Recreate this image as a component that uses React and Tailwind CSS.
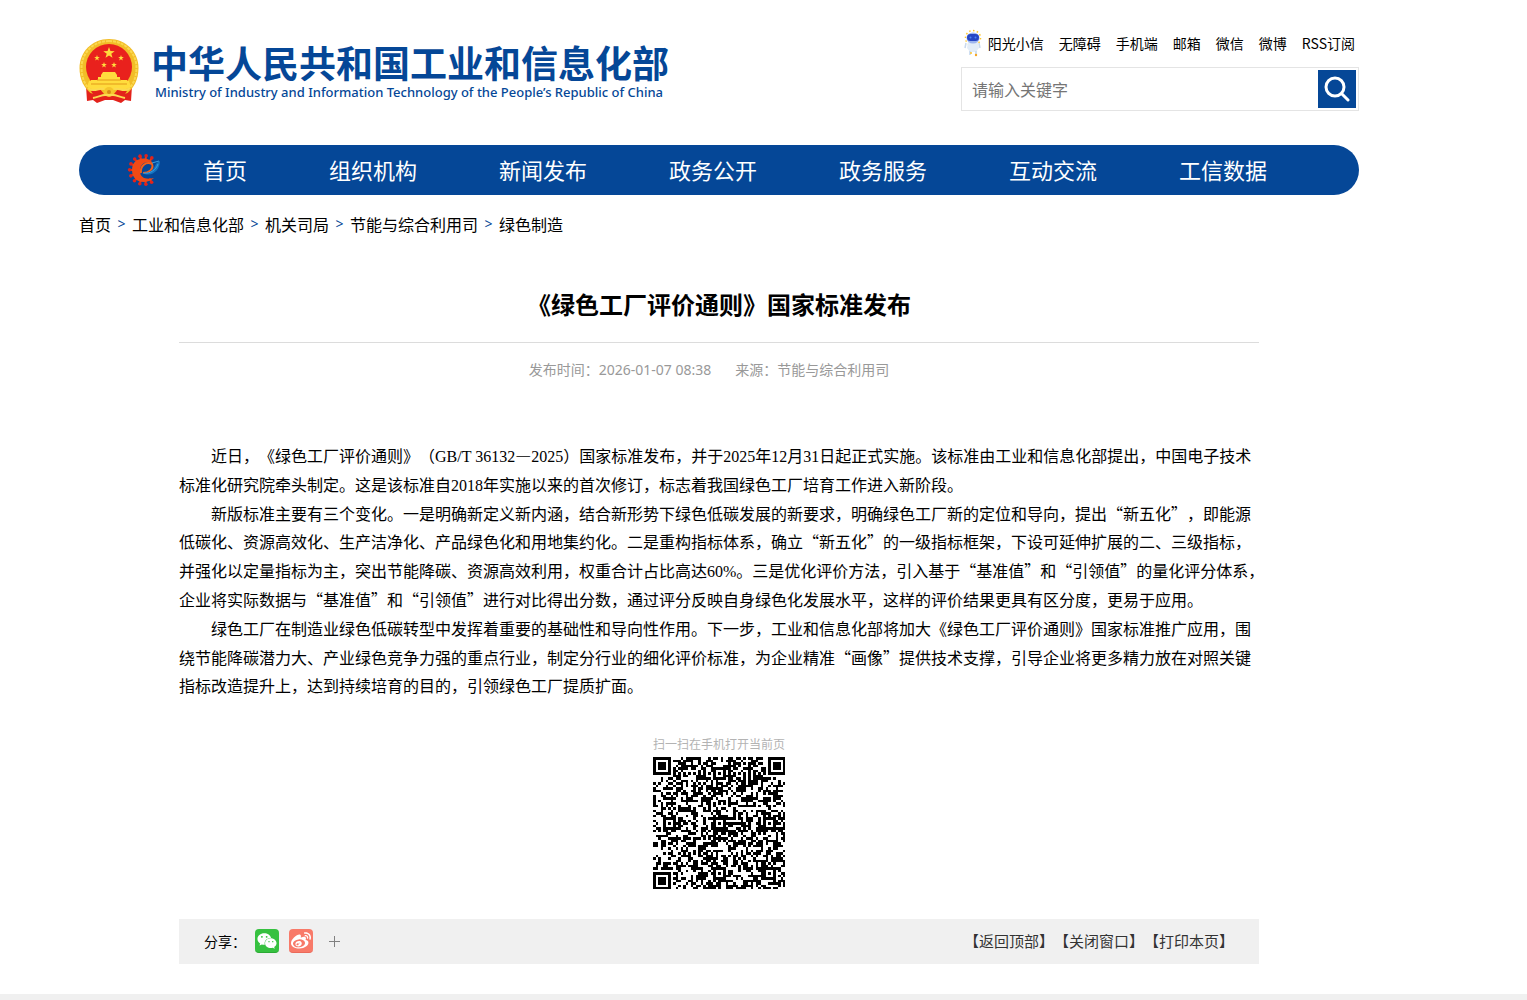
import React from "react";
import { FaWeibo, FaWeixin } from "react-icons/fa";

const quickLinks = ["无障碍", "手机端", "邮箱", "微信", "微博", "RSS订阅"];
const navItems = ["首页", "组织机构", "新闻发布", "政务公开", "政务服务", "互动交流", "工信数据"];
const crumbs = ["首页", "工业和信息化部", "机关司局", "节能与综合利用司", "绿色制造"];
const paragraphs = [
  "近日，《绿色工厂评价通则》（GB/T 36132—2025）国家标准发布，并于2025年12月31日起正式实施。该标准由工业和信息化部提出，中国电子技术标准化研究院牵头制定。这是该标准自2018年实施以来的首次修订，标志着我国绿色工厂培育工作进入新阶段。",
  "新版标准主要有三个变化。一是明确新定义新内涵，结合新形势下绿色低碳发展的新要求，明确绿色工厂新的定位和导向，提出“新五化”，即能源低碳化、资源高效化、生产洁净化、产品绿色化和用地集约化。二是重构指标体系，确立“新五化”的一级指标框架，下设可延伸扩展的二、三级指标，并强化以定量指标为主，突出节能降碳、资源高效利用，权重合计占比高达60%。三是优化评价方法，引入基于“基准值”和“引领值”的量化评分体系，企业将实际数据与“基准值”和“引领值”进行对比得出分数，通过评分反映自身绿色化发展水平，这样的评价结果更具有区分度，更易于应用。",
  "绿色工厂在制造业绿色低碳转型中发挥着重要的基础性和导向性作用。下一步，工业和信息化部将加大《绿色工厂评价通则》国家标准推广应用，围绕节能降碳潜力大、产业绿色竞争力强的重点行业，制定分行业的细化评价标准，为企业精准“画像”提供技术支撑，引导企业将更多精力放在对照关键指标改造提升上，达到持续培育的目的，引领绿色工厂提质扩面。",
];

const star = (cx, cy, r) =>
  Array.from({ length: 10 }, (_, i) => {
    const a = (Math.PI / 5) * i - Math.PI / 2;
    const q = i % 2 ? r * 0.4 : r;
    return `${(cx + q * Math.cos(a)).toFixed(2)},${(cy + q * Math.sin(a)).toFixed(2)}`;
  }).join(" ");

function Emblem() {
  return (
    <svg width="60" height="66" viewBox="0 0 60 66" aria-hidden="true" className="shrink-0">
      <path d="M7 48L8 63l6-1 4 3 8-3h8l8 3 4-3 6 1 1-15z" fill="#e3221b" />
      <path d="M30 1C13 1 .5 14 .5 30c0 12 5 20 11 25l9 3h19l9-3c6-5 11-13 11-25C59.500 14 47 1 30 1z" fill="#f2bd27" />
      <path d="M30 3C14 3 2.500 15 2.500 30c0 10 4 18 9 22M30 3c16 0 27.500 12 27.500 27 0 10-4 18-9 22" fill="none" stroke="#fbd950" strokeWidth="2" strokeDasharray="3 1" />
      <circle cx="30" cy="29" r="23" fill="#e9211d" />
      <g fill="#ffdc3d">
        <polygon points={star(30, 15, 6)} />
        <polygon points={star(18, 20, 3)} />
        <polygon points={star(42, 20, 3)} />
        <polygon points={star(25, 27, 3)} />
        <polygon points={star(35, 27, 3)} />
        <path d="M22 37l2-3h12l2 3v2h3v3h7l2 4H10l2-4h7v-3h3z" />
        <path d="M10 43h40l2 6-7 3H15l-7-3z" />
      </g>
      <path d="M12 46h36M18 42h24" stroke="#e39a1b" strokeWidth="1" />
      <path d="M12 53l9-2 4 5-8 5zM48 53l-9-2-4 5 8 5z" fill="#e3221b" />
      <circle cx="30" cy="54" r="5" fill="#f5c52d" />
      <circle cx="30" cy="54" r="2" fill="#d78b17" />
      <path d="M10 51c6 3 9-1 15 0M50 51c-6 3-9-1-15 0M14 60c5-1 9-3 12-3h8c3 0 7 2 12 3" fill="none" stroke="#fbd950" strokeWidth="2" />
    </svg>
  );
}

function Robot() {
  return (
    <svg width="18" height="28" viewBox="0 0 18 28" aria-hidden="true" className="shrink-0">
      <circle cx="9" cy="9" r="7.500" fill="none" stroke="#ffc629" strokeWidth="1.500" strokeDasharray="1.500 2.400" />
      <path d="M4 13h10l1 6-3 4H6l-3-4z" fill="#e3edf8" />
      <path d="M6 22v4M12 22v3" stroke="#cfdff2" strokeWidth="2" />
      <path d="M2 14l-1 5M15 14l1 5" stroke="#c8d9ee" strokeWidth="1.500" />
      <ellipse cx="9" cy="9" rx="6.500" ry="5.500" fill="#9db5ee" />
      <rect x="3" y="5" width="12" height="7" rx="3.500" fill="#2746c4" />
      <circle cx="6.500" cy="8.500" r="1" fill="#4d86f0" />
      <circle cx="11.500" cy="8.500" r="1" fill="#4d86f0" />
      <circle cx="7" cy="24" r="1" fill="#ffc629" />
      <circle cx="12" cy="26" r="1.200" fill="#f5a623" />
    </svg>
  );
}

function GearLogo() {
  const teeth = Array.from({ length: 11 }, (_, i) => ((58 + i * 24.5) * Math.PI) / 180);
  return (
    <svg width="34" height="34" viewBox="0 0 34 34" aria-hidden="true" className="shrink-0">
      <g stroke="#ea3a16" strokeWidth="2">
        {teeth.map((a) => (
          <line key={a} x1={17 + 10 * Math.cos(a)} y1={17 + 10 * Math.sin(a)} x2={17 + 14 * Math.cos(a)} y2={17 + 14 * Math.sin(a)} />
        ))}
      </g>
      <g fill="#e2231a">
        {teeth.map((a) => (
          <circle key={a} cx={17 + 14.4 * Math.cos(a)} cy={17 + 14.4 * Math.sin(a)} r="1.800" />
        ))}
      </g>
      <path d="M26 11C23 3 5 3 5 17c0 13 14 15 22 8-8 2-14 0-14-7 0-8 7-11 13-7z" fill="#f04a16" />
      <path d="M14 20c-1-7 5-12 11-9 2 5-3 9-9 9" fill="none" stroke="#f4601a" strokeWidth="2" />
      <path d="M15 20c8 1 11-3 13-7 1-3 3-4 5-5 0 9-8 17-18 12z" fill="#1373c0" />
      <path d="M25 10l7-2M17 20c6 1 12-3 14-9" fill="none" stroke="#3a9ee0" strokeWidth="1" />
    </svg>
  );
}

const QR_SIZE = 53;

function buildQr() {
  const n = QR_SIZE;
  let seed = 20260107;
  const rand = () => {
    seed = (seed * 1103515245 + 12345) % 2147483648;
    return seed / 2147483648;
  };
  const grid = Array.from({ length: n }, () => Array.from({ length: n }, () => rand() < 0.5));
  const square = (cx, cy, r, isDark) => {
    for (let y = -r; y <= r; y++)
      for (let x = -r; x <= r; x++) {
        const row = grid[cy + y];
        if (row && cx + x >= 0 && cx + x < n) row[cx + x] = isDark(Math.max(Math.abs(x), Math.abs(y)));
      }
  };
  for (let i = 0; i < n; i++) {
    grid[6][i] = i % 2 === 0;
    grid[i][6] = i % 2 === 0;
  }
  [[3, 3], [n - 4, 3], [3, n - 4]].forEach(([x, y]) => square(x, y, 4, (d) => d !== 2 && d !== 4));
  [[26, 6], [6, 26], [26, 26], [46, 26], [26, 46], [46, 46]].forEach(([x, y]) => square(x, y, 2, (d) => d !== 1));
  const px = (v) => Math.ceil((v * 132) / n);
  return grid
    .map((row, y) =>
      row
        .map((on, x) => (on ? `M${px(x)} ${px(y)}H${px(x + 1)}V${px(y + 1)}H${px(x)}z` : ""))
        .join("")
    )
    .join("");
}

const qrPath = buildQr();

function BodyText({ text }) {
  return text.split(/([A-Za-z0-9/% ]+)/).map((part, i) =>
    i % 2 ? (
      <span key={i} className="font-['Liberation_Serif',serif] leading-none">{part}</span>
    ) : (
      part
    )
  );
}

export default function App() {
  return (
    <div lang="zh-CN" className="bg-white font-['Noto_Sans_CJK_SC',sans-serif] text-sm text-black [text-spacing-trim:space-all]">
      <div className="ml-[79px] max-w-[1280px]">
        <header className="flex items-start justify-between pt-[29px]">
          <a href="#" className="flex gap-3 pt-[9px]">
            <Emblem />
            <span className="block whitespace-nowrap text-[#054797]">
              <span className="block text-[37px] leading-[48px] font-bold">中华人民共和国工业和信息化部</span>
              <span className="block pl-1 font-['Noto_Sans',sans-serif] text-[13px] leading-3 font-medium">
                Ministry of Industry and Information Technology of the People’s Republic of China
              </span>
            </span>
          </a>
          <div className="w-[398px]">
            <div className="flex items-center justify-end gap-[15px] pr-1 whitespace-nowrap">
              <a href="#" className="flex items-center gap-1.5">
                <Robot />
                阳光小信
              </a>
              {quickLinks.map((t) => (
                <a href="#" key={t}>{t}</a>
              ))}
            </div>
            <form className="mt-2.5 flex h-11 items-center border border-[#e4e4e4] pr-0.5" onSubmit={(e) => e.preventDefault()}>
              <input
                type="text"
                aria-label="搜索"
                placeholder="请输入关键字"
                className="min-w-0 flex-1 px-2.5 text-base outline-none placeholder:text-[#757575]"
              />
              <button type="submit" aria-label="搜索" className="flex size-[38px] items-center justify-center bg-[#054797]">
                <svg width="26" height="26" viewBox="0 0 26 26" fill="none" stroke="white" strokeWidth="3" strokeLinecap="round">
                  <circle cx="11" cy="11" r="9" />
                  <path d="M18 18l6 6" />
                </svg>
              </button>
            </form>
          </div>
        </header>

        <nav className="mt-[34px] flex h-[50px] items-center rounded-full bg-[#054797] pl-12 text-[22px] text-white">
          <GearLogo />
          <div className="ml-[42px] flex gap-[82px] whitespace-nowrap">
            {navItems.map((t) => (
              <a href="#" key={t}>{t}</a>
            ))}
          </div>
        </nav>

        <div className="mt-[17px] flex items-center gap-1.5 text-base leading-6">
          {crumbs.map((t, i) => (
            <React.Fragment key={t}>
              {i > 0 && <span className="w-[9px] text-center font-['Noto_Sans',sans-serif] text-sm text-[#054797]">&gt;</span>}
              <a href="#">{t}</a>
            </React.Fragment>
          ))}
        </div>

        <main className="mx-[100px] mt-[50px]">
          <h1 className="border-b border-[#dcdcdc] pb-5 text-center text-2xl leading-9 font-bold">《绿色工厂评价通则》国家标准发布</h1>
          <p className="mt-4 flex justify-center gap-6 pr-5 font-['Noto_Sans','Noto_Sans_CJK_SC',sans-serif] leading-[22px] text-[#999999]">
            <span>发布时间：2026-01-07 08:38</span>
            <span>来源：节能与综合利用司</span>
          </p>
          <article className="-mr-1.5 mt-[60px] text-base leading-[1.8]">
            {paragraphs.map((t) => (
              <p key={t} className="indent-8">
                <BodyText text={t} />
              </p>
            ))}
          </article>
          <div className="mt-[34px] flex flex-col items-center">
            <p className="text-xs leading-5 text-[#b3b3b3]">扫一扫在手机打开当前页</p>
            <svg width="132" height="132" viewBox="0 0 132 132" shapeRendering="crispEdges" role="img" aria-label="二维码" className="mt-[3px]">
              <path d={qrPath} fill="black" />
            </svg>
          </div>
          <div className="mt-[30px] flex h-[45px] items-center justify-between bg-[#f0f0f0] px-[25px] pb-px">
            <div className="flex items-center">
              <span className="mr-[9px]">分享：</span>
              <button type="button" aria-label="微信" className="mr-2.5 flex size-6 items-center justify-center rounded-sm border-b border-[#2ba934] bg-[#36c140] text-xl text-white">
                <FaWeixin />
              </button>
              <button type="button" aria-label="微博" className="mr-4 flex size-6 items-center justify-center rounded-sm border-b border-[#ea6a5a] bg-[#f87a69] text-xl text-white">
                <FaWeibo />
              </button>
              <button type="button" aria-label="更多" className="text-[#808080]">
                <svg width="11" height="11" viewBox="0 0 11 11" stroke="currentColor">
                  <path d="M0 5.500h11M5.500 0v11" />
                </svg>
              </button>
            </div>
            <div className="flex text-[15px] text-[#333333]">
              <a href="#">【返回顶部】</a>
              <a href="#">【关闭窗口】</a>
              <a href="#">【打印本页】</a>
            </div>
          </div>
        </main>
      </div>
      <footer className="mt-[30px] h-1.5 bg-[#f0f0f0]" />
    </div>
  );
}
